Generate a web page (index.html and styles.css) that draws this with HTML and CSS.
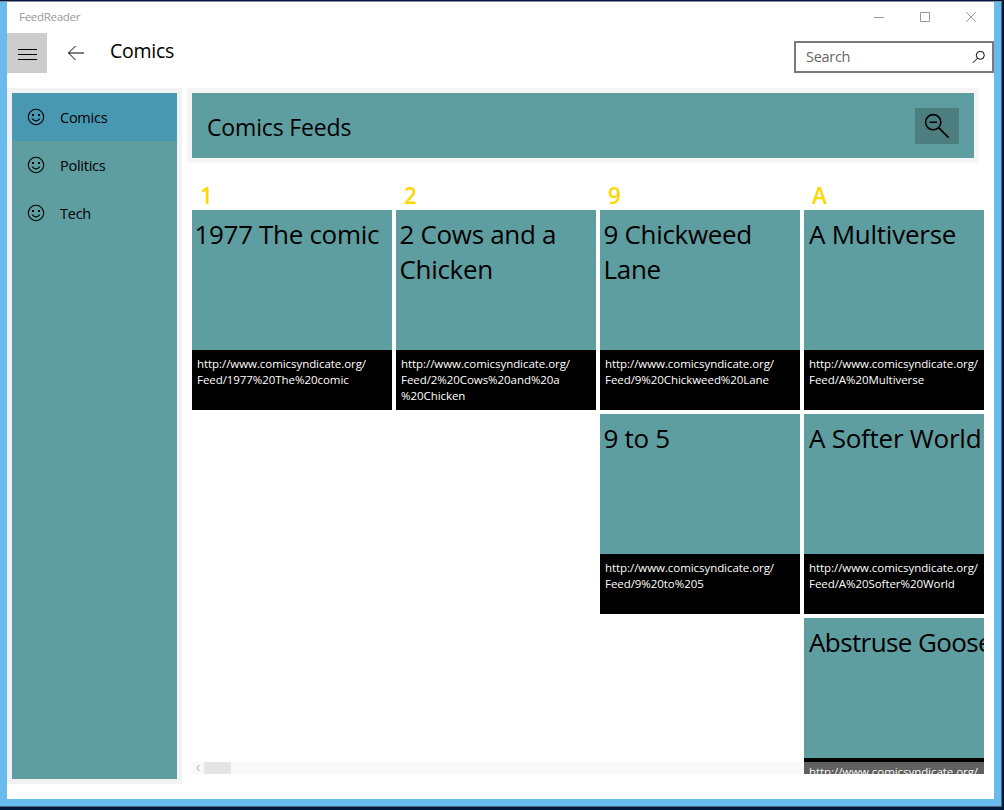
FILE: index.html
```html
<!DOCTYPE html>
<html lang="en">
<head>
<meta charset="utf-8">
<title>FeedReader</title>
<link rel="stylesheet" href="styles.css">
</head>
<body>
<div class="desktop">
<div class="window">
  <div class="titlebar">
    <span class="app-name">FeedReader</span>
    <div class="controls">
      <svg width="46" height="31" viewBox="0 0 46 31"><path d="M18 15.5h10"/></svg>
      <svg width="46" height="31" viewBox="0 0 46 31"><path d="M18.500 10.500h9v9h-9z"/></svg>
      <svg width="46" height="31" viewBox="0 0 46 31"><path d="M18.200 10.200l9.600 9.600M27.800 10.200l-9.600 9.600"/></svg>
    </div>
  </div>
  <header class="navbar">
    <div class="menu-btn"><svg width="40" height="40" viewBox="0 0 40 40"><path d="M11 16.500h19M11 21.500h19M11 26.500h19"/></svg></div>
    <svg class="back" width="18" height="16" viewBox="0 0 18 16"><path d="M17 8H1.500M8.500 1L1.500 8l7 7"/></svg>
    <h1 class="page-title">Comics</h1>
    <div class="search"><span>Search</span>
      <svg width="14" height="14" viewBox="0 0 14 14"><circle cx="8.300" cy="5.300" r="4"/><path d="M5.500 8.200L.8 12.900"/></svg>
    </div>
  </header>
  <div class="body">
    <nav class="sidebar">
      <div class="nav-item selected"><svg width="18" height="18" viewBox="0 0 18 18"><circle cx="9" cy="9" r="7.700"/><path d="M5 10.700q4 4.300 8 0"/><path class="dot" d="M5 6h2v2H5zM11 6h2v2h-2z"/></svg><span>Comics</span></div>
      <div class="nav-item"><svg width="18" height="18" viewBox="0 0 18 18"><circle cx="9" cy="9" r="7.700"/><path d="M5 10.700q4 4.300 8 0"/><path class="dot" d="M5 6h2v2H5zM11 6h2v2h-2z"/></svg><span>Politics</span></div>
      <div class="nav-item"><svg width="18" height="18" viewBox="0 0 18 18"><circle cx="9" cy="9" r="7.700"/><path d="M5 10.700q4 4.300 8 0"/><path class="dot" d="M5 6h2v2H5zM11 6h2v2h-2z"/></svg><span>Tech</span></div>
    </nav>
    <main class="main">
      <div class="banner"><h2>Comics Feeds</h2>
        <div class="zoom-btn"><svg width="44" height="36" viewBox="0 0 44 36"><circle cx="18.200" cy="14.200" r="7.600"/><path d="M14.500 14.200h7.400M23.600 19.600l10 10"/></svg></div>
      </div>
      <div class="feeds">
        <section class="group"><h3>1</h3>
          <article class="tile"><div class="name digits">1977 The comic</div><div class="url">http://www.comicsyndicate.org/<br>Feed/1977%20The%20comic</div></article>
        </section>
        <section class="group"><h3>2</h3>
          <article class="tile"><div class="name">2 Cows and a<br>Chicken</div><div class="url">http://www.comicsyndicate.org/<br>Feed/2%20Cows%20and%20a<br>%20Chicken</div></article>
        </section>
        <section class="group"><h3>9</h3>
          <article class="tile"><div class="name">9 Chickweed<br>Lane</div><div class="url">http://www.comicsyndicate.org/<br>Feed/9%20Chickweed%20Lane</div></article>
          <article class="tile"><div class="name">9 to 5</div><div class="url">http://www.comicsyndicate.org/<br>Feed/9%20to%205</div></article>
        </section>
        <section class="group letter"><h3>A</h3>
          <article class="tile"><div class="name">A Multiverse</div><div class="url">http://www.comicsyndicate.org/<br>Feed/A%20Multiverse</div></article>
          <article class="tile"><div class="name">A Softer World</div><div class="url">http://www.comicsyndicate.org/<br>Feed/A%20Softer%20World</div></article>
          <article class="tile"><div class="name tight">Abstruse Goose</div><div class="url">http://www.comicsyndicate.org/</div></article>
        </section>
        <div class="scrollbar"><svg width="12" height="12" viewBox="0 0 12 12"><path d="M7.500 3L4.800 6l2.700 3"/></svg><div class="thumb"></div></div>
      </div>
    </main>
  </div>
</div>
</div>
</body>
</html>
```
FILE: styles.css
```css
* { box-sizing: border-box; }
body { margin: 0; font-family: "Open Sans", "Noto Sans", sans-serif; color: #000; }
h1, h2, h3 { margin: 0; font-weight: 400; }
svg { display: block; flex: none; fill: none; stroke: #000; }
.desktop { width: 1004px; height: 810px; overflow: hidden; background: #001a3d; padding: 1px 2px 3px 0; }
.window { height: 806px; display: flex; flex-direction: column; background: #fff;
  border-top: 1px solid #858b98; border-right: 1px solid #4d6377; border-bottom: 1px solid #4d6377;
  box-shadow: inset 7px 0 #69baed, inset -7px 0 #69baed, inset 0 -7px #69baed; padding: 0 7px 7px; }
.titlebar { height: 31px; flex: none; display: flex; justify-content: space-between; }
.app-name { padding-left: 12px; font-size: 11.5px; line-height: 29px; color: #999; letter-spacing: -.3px; }
.controls { display: flex; }
.controls svg { stroke: #999; }
.navbar { height: 55px; flex: none; display: flex; align-items: flex-start; }
.menu-btn { width: 40px; height: 40px; background: #ccc; }
.back { margin: 12px 0 0 20px; }
.page-title { margin-left: 25px; font-size: 19.5px; line-height: 36px; letter-spacing: -.25px; }
.search { margin-left: auto; margin-top: 8px; width: 200px; height: 32px; border: 2px solid #7a7a7a;
  display: flex; align-items: center; justify-content: space-between; padding: 0 6px 0 10px;
  font-size: 14.5px; color: #666; letter-spacing: -.3px; }
.search span { padding-bottom: 2px; }
.body { flex: 1; min-height: 0; display: flex; gap: 5px; }
.sidebar { width: 175px; height: 696px; border: 5px solid #f2f2f2; background: #5f9ea0; }
.nav-item { height: 48px; display: flex; align-items: center; gap: 15px; padding-left: 15px; font-size: 14.5px; letter-spacing: -.25px; }
.nav-item svg { stroke-width: 1.1; }
.nav-item .dot { fill: #000; stroke: none; }
.nav-item.selected { background: #4898b2; }
.main { width: 797px; display: flex; flex-direction: column; }
.banner { width: 792px; height: 75px; flex: none; border: 5px solid #f5f5f5; background: #5f9ea0; padding: 0 15px;
  display: flex; align-items: center; justify-content: space-between; }
.banner h2 { font-size: 23px; letter-spacing: -.15px; padding-top: 2px; }
.zoom-btn { width: 44px; height: 36px; background: #4c7e80; }
.zoom-btn svg { stroke-width: 1.6; }
.feeds { position: relative; margin-left: 5px; height: 611px; overflow: hidden; display: flex; gap: 4px; }
.group { width: 200px; flex: none; display: flex; flex-direction: column; gap: 4px; }
.group h3 { height: 43px; flex: none; padding: 17px 0 0 8px; font-size: 22.5px; line-height: 32px; font-weight: 600; color: #ffd700; }
.tile { height: 200px; flex: none; background: #5f9ea0; display: flex; flex-direction: column; justify-content: space-between; }
.name { padding: 7px 0 0 3.5px; font-size: 26px; line-height: 35px; letter-spacing: -.32px; white-space: nowrap; }
.digits { padding-left: 2.5px; }
.letter .name { padding-left: 5px; letter-spacing: -.25px; }
.letter .tight { letter-spacing: -.6px; }
.url { height: 60px; background: #000; color: #fff; padding: 6px 5px; font-size: 11.5px; line-height: 16px; letter-spacing: -.06px; white-space: nowrap; }
.scrollbar { position: absolute; left: 0; right: 0; bottom: 0; height: 12px; display: flex; background: rgba(240, 240, 240, .4); }
.scrollbar svg { stroke: #ccc; stroke-width: 1.5; }
.thumb { width: 27px; background: #e5e5e5; }
```
